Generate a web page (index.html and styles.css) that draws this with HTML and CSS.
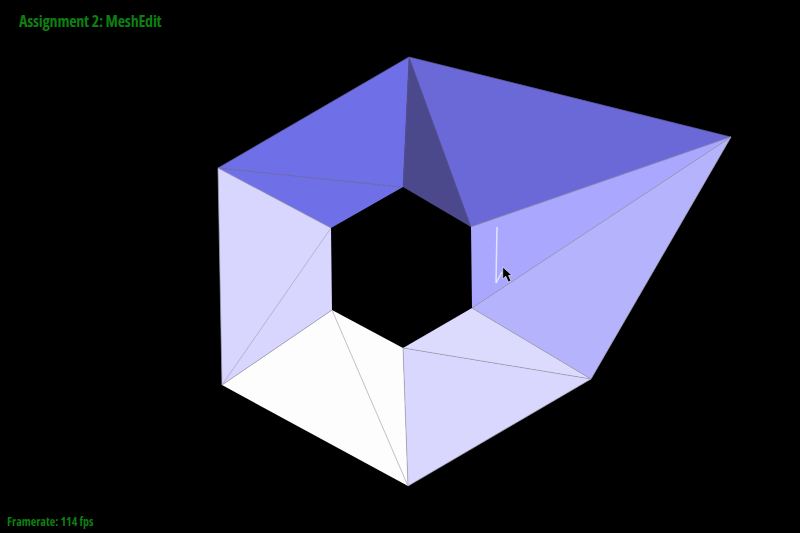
FILE: index.html

```html
<!DOCTYPE html>
<html lang="en">
<head>
    <meta charset="UTF-8">
    <title>Assignment 2: MeshEdit</title>
    <link rel="stylesheet" href="styles.css">
</head>
<body>
    <div class="viewer">
        <svg class="mesh" width="800" height="533" viewBox="0 0 800 533">
            <!-- faces -->
            <polygon class="face top-left" points="409,57 218,168 331,228 403,187"/>
            <polygon class="face inner-dark" points="409,57 403,187 471,227"/>
            <polygon class="face top-right" points="409,57 731,137 471,227"/>
            <polygon class="face right-up" points="471,227 731,137 472,308"/>
            <polygon class="face right-low" points="731,137 591,379 472,308"/>
            <polygon class="face low-right-a" points="472,308 591,379 403,348"/>
            <polygon class="face low-right-b" points="403,348 591,379 408,486"/>
            <polygon class="face bottom" points="332,310 403,348 408,486 222,385"/>
            <polygon class="face left" points="218,168 331,228 332,310 222,385"/>

            <!-- edges -->
            <path class="edge dim" d="M218 168L409 57M409 57L731 137M403 187L409 57M471 227L409 57"/>
            <path class="edge dash" d="M218 168L401 187"/>
            <path class="edge" d="M471 227L731 137M472 308L731 137M731 137L591 379M472 308L591 379M403 348L591 379M403 348L408 486M408 486L591 379"/>
            <path class="edge" d="M218 168L222 385M331 228L222 385M332 310L222 385M332 310L408 486M218 168L331 228"/>

            <!-- selection trail -->
            <path class="trail" d="M497 227L496 283L502 272"/>
            <path class="cursor" d="M502.700 267V279L505.800 276.300L508.300 282L511 280.800L508.500 275.500L511.800 275.200Z"/>
        </svg>
        <div class="label title">Assignment 2: MeshEdit</div>
        <div class="label fps">Framerate: 114 fps</div>
    </div>
</body>
</html>
```

FILE: styles.css

```css
body { margin: 0; background: #000; overflow: hidden; }
.viewer { position: relative; width: 800px; height: 533px; background: #000; }
.mesh { display: block; }

.face { stroke: none; }
.top-left { fill: #6f6fe8; }
.inner-dark { fill: #4b488c; }
.top-right { fill: #6b68d8; }
.right-up { fill: #a9a7fe; }
.right-low { fill: #b5b3fb; }
.low-right-a { fill: #dddbfd; }
.low-right-b { fill: #d9d7fd; }
.bottom { fill: #fdfdfd; }
.left { fill: #d8d6fe; }

.edge { fill: none; stroke: #a5a5b8; stroke-width: 0.7; }
.edge.dim { stroke: #5c5a9c; }
.edge.dash { stroke: #6e6c98; stroke-width: 1; stroke-dasharray: 4 1; }
.trail { fill: none; stroke: #e4e3ff; stroke-width: 1.5; }
.cursor { fill: #000; stroke: #e6e6ff; stroke-width: 0.7; }

.label { position: absolute; color: #0d7f12; font-family: "Open Sans", sans-serif; font-weight: 700; white-space: nowrap; font-stretch: condensed; }
.title { left: 19px; top: 11px; font-size: 16px; line-height: 20px; letter-spacing: -0.2px; }
.fps { left: 7px; top: 514px; font-size: 12px; line-height: 16px; }
```
